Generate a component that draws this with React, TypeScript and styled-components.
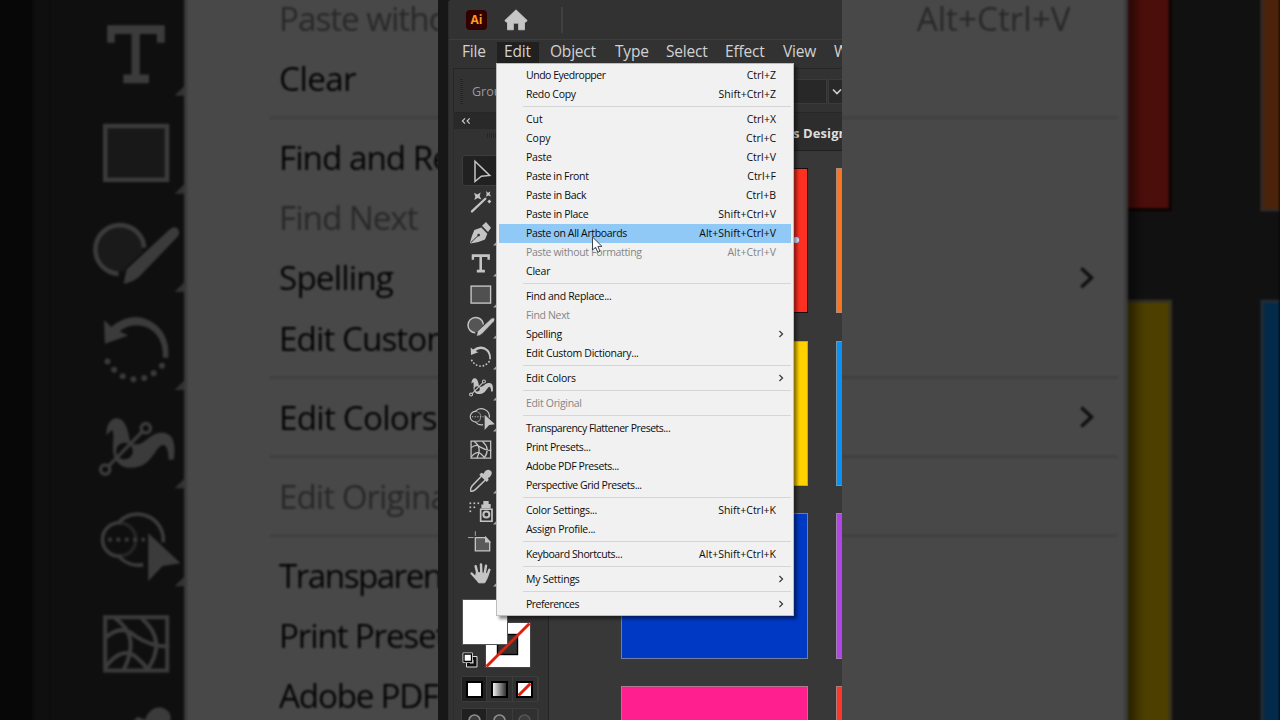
import React from "react";
import styled, { createGlobalStyle, css } from "styled-components";

const GlobalStyle = createGlobalStyle`
  * { box-sizing: border-box; }
  body { margin: 0; background: #000; overflow: hidden; }
`;

const uiFont = `"Open Sans", "Noto Sans", sans-serif`;
const ink = "#c4c4c4";

const Stage = styled.main`
  position: relative;
  display: flex;
  justify-content: center;
  width: 1280px;
  height: 720px;
  overflow: hidden;
  background: #050505;
  font-family: ${uiFont};
`;

const Backdrop = styled.div`
  position: absolute;
  inset: 0;
  display: flex;
  justify-content: center;
  filter: brightness(0.3) blur(1px);
`;

const Enlarged = styled.div`
  flex: none;
  width: 404px;
  height: 720px;
  transform: scale(3.166);
`;

const Phone = styled.div`
  position: relative;
  flex: none;
  width: 404px;
  height: 720px;
`;

const Scene = styled.section`
  position: relative;
  width: 404px;
  height: 720px;
  padding-left: 10px;
  overflow: hidden;
  background: #171717;
`;

const Window = styled.div`
  display: flex;
  flex-direction: column;
  width: 394px;
  height: 720px;
  background: #323232;
  border-left: 1px solid #2b2b2b;
  border-top-left-radius: 3px;
`;

const TitleBar = styled.header`
  display: flex;
  align-items: center;
  flex: none;
  height: 39px;
  padding-left: 17px;
`;

const Logo = styled.div`
  width: 21px;
  height: 20px;
  border-radius: 4px;
  background: #330000;
  color: #ff9a1a;
  font: 700 12px/19px ${uiFont};
  text-align: center;
`;

const HomeIcon = styled.svg`
  width: 24px;
  height: 22px;
  margin-left: 17px;
`;

const TitleDivider = styled.i`
  width: 2px;
  height: 26px;
  margin-left: 33px;
  background: #404040;
`;

const MenuBar = styled.nav`
  display: flex;
  flex: none;
  height: 29px;
  padding: 2px 0 5px 6px;
  border-top: 1px solid #3d3d3d;
  overflow: hidden;
`;

const MenuBarItem = styled.span<{ $w: number; $gap?: number; $open?: boolean }>`
  flex: none;
  width: ${(p) => p.$w}px;
  margin-right: ${(p) => p.$gap ?? 0}px;
  padding-left: 7px;
  color: #d2d2d2;
  background: ${(p) => (p.$open ? "#202020" : "transparent")};
  font-size: 15.5px;
  letter-spacing: -0.2px;
  line-height: 19px;
  white-space: nowrap;
`;

const ControlBar = styled.div`
  display: flex;
  align-items: center;
  flex: none;
  height: 45px;
  margin-left: 4px;
  padding-top: 2px;
  border: solid #272727;
  border-width: 1px 0 1px 1px;
  overflow: hidden;
`;

const Grip = styled.i`
  flex: none;
  width: 3px;
  height: 25px;
  margin-left: 6px;
  background: repeating-linear-gradient(#242424 0 1px, #363636 1px 2px);
`;

const ControlLabel = styled.span`
  flex: none;
  width: 321px;
  padding: 1px 0 0 9px;
  color: #9a9a9a;
  font-size: 12.5px;
  line-height: 20px;
`;

const Field = styled.div<{ $w: number }>`
  display: flex;
  align-items: center;
  flex: none;
  width: ${(p) => p.$w}px;
  height: 25px;
  padding-left: 3px;
  margin-right: 1px;
  background: #282828;
  border: 1px solid #3b3b3b;
`;

const Workspace = styled.div`
  display: flex;
  flex: 1;
  min-height: 0;
  padding-left: 4px;
`;

const Dock = styled.aside`
  flex: none;
  width: 96px;
  border-right: 1px solid #242424;
  border-left: 1px solid #2c2c2c;
`;

const DockHeader = styled.div`
  height: 16px;
  padding: 4px 0 0 7px;
  background: #292929;
`;

const DockGrip = styled.div`
  width: 32px;
  height: 5px;
  margin: 4px auto 16.7px 33px;
  background: repeating-linear-gradient(90deg, #262626 0 1px, #343434 1px 2px);
`;

const ToolColumn = styled.div`
  display: flex;
  flex-direction: column;
  margin: 0 0 9.3px 8px;
`;

const Tool = styled.div<{ $active?: boolean }>`
  width: 38px;
  height: 31.05px;
  ${(p) =>
    p.$active &&
    css`
      background: #212121;
      border-radius: 3px;
      box-shadow: inset 0 0 0 1px #3c3c3c;
    `}
  svg { display: block; width: 38px; height: 31px; }
`;

const ColorWell = styled.div`
  position: relative;
  width: 69px;
  height: 68px;
  margin-left: 8px;
`;

const StrokeSwatch = styled.svg`
  position: absolute;
  left: 23px;
  top: 23px;
  width: 46px;
  height: 46px;
`;

const FillSwatch = styled.div`
  position: absolute;
  left: 0;
  top: 0;
  width: 46px;
  height: 46px;
  background: #fff;
  border: 1px solid #555;
`;

const SwapIcon = styled.svg`
  position: absolute;
  left: 0;
  top: 53px;
  width: 16px;
  height: 16px;
`;

const ModeRow = styled.div<{ $mt: number }>`
  display: flex;
  width: 78px;
  height: 26px;
  margin: ${(p) => p.$mt}px 0 0 7px;
  border: 1px solid #3c3c3c;
  border-radius: 2px;
`;

const Mode = styled.div<{ $on?: boolean }>`
  display: flex;
  align-items: center;
  justify-content: center;
  flex: 1;
  background: ${(p) => (p.$on ? "#202020" : "#303030")};
  border-right: 1px solid #3c3c3c;
  svg { width: 17px; height: 17px; }
`;

const Documents = styled.div`
  display: flex;
  flex-direction: column;
  flex: 1;
  min-width: 0;
`;

const TabStrip = styled.div`
  flex: none;
  height: 38px;
  padding: 10px 0 0 244px;
  background: #2d2d2d;
  border-bottom: 1px solid #202020;
  color: #dedede;
  font: 700 13px/20px ${uiFont};
  letter-spacing: 0.1px;
  white-space: nowrap;
  overflow: hidden;
`;

const Canvas = styled.div`
  display: grid;
  flex: 1;
  grid-template-columns: 187.4px 187.4px;
  grid-auto-rows: 145.4px;
  gap: 27.3px 27.4px;
  padding: 17px 0 0 72px;
  min-height: 0;
  overflow: hidden;
  background: #383838;
`;

const Artboard = styled.div<{ $c: string; $edge?: string }>`
  background: ${(p) => p.$c};
  border: 1px solid ${(p) => p.$edge ?? "rgba(150, 150, 150, 0.75)"};
`;

const Anchor = styled.i`
  position: absolute;
  left: 355px;
  top: 237px;
  width: 6px;
  height: 6px;
  border-radius: 3px;
  background: #eef0ff;
  box-shadow: 0 0 1px 0.5px #8a5fd0;
`;

const Popup = styled.div`
  position: absolute;
  left: 58px;
  top: 63px;
  width: 298px;
  height: 553px;
  padding: 2px;
  background: #f1f1f1;
  border: 1px solid #bdbdbd;
  box-shadow: 3px 3px 3px rgba(0, 0, 0, 0.45);
`;

const Entry = styled.div<{ $hot?: boolean; $dim?: boolean }>`
  display: flex;
  align-items: center;
  justify-content: space-between;
  height: 19px;
  padding: 0 15px 0 27px;
  background: ${(p) => (p.$hot ? "#90c8f6" : "transparent")};
  color: ${(p) => (p.$dim ? "#858585" : "#0c0c0c")};
  font-size: 10.5px;
  line-height: 19px;
  white-space: nowrap;
`;

const EntryLabel = styled.span<{ $track: number }>`
  letter-spacing: ${(p) => p.$track}px;
`;

const Arrow = styled.svg`
  width: 6px;
  height: 8px;
  margin: -1.5px -7.5px 0 0;
`;

const Rule = styled.hr`
  height: 1px;
  margin: 2px 0 3px 24px;
  border: 0;
  background: #d6d6d6;
`;

const Pointer = styled.svg`
  position: absolute;
  left: 153px;
  top: 236px;
  width: 13px;
  height: 18px;
`;

type Line = { label: string; track: number; keys?: string; sub?: boolean; dim?: boolean; hot?: boolean; peek?: string };

const groups: Line[][] = [
  [
    { label: "Undo Eyedropper", track: -0.47, keys: "Ctrl+Z" },
    { label: "Redo Copy", track: -0.3, keys: "Shift+Ctrl+Z" },
  ],
  [
    { label: "Cut", track: 0, keys: "Ctrl+X" },
    { label: "Copy", track: 0, keys: "Ctrl+C" },
    { label: "Paste", track: -0.2, keys: "Ctrl+V" },
    { label: "Paste in Front", track: -0.36, keys: "Ctrl+F" },
    { label: "Paste in Back", track: -0.33, keys: "Ctrl+B" },
    { label: "Paste in Place", track: -0.34, keys: "Shift+Ctrl+V" },
    { label: "Paste on All Artboards", track: -0.35, keys: "Alt+Shift+Ctrl+V", hot: true },
    { label: "Paste without Formatting", track: -0.33, keys: "Alt+Ctrl+V", dim: true, peek: "Paste witho" },
    { label: "Clear", track: -0.2, peek: "Clear" },
  ],
  [
    { label: "Find and Replace...", track: -0.32, peek: "Find and Re" },
    { label: "Find Next", track: -0.33, dim: true, peek: "Find Next" },
    { label: "Spelling", track: -0.28, sub: true, peek: "Spelling" },
    { label: "Edit Custom Dictionary...", track: -0.3, peek: "Edit Custom" },
  ],
  [{ label: "Edit Colors", track: -0.25, sub: true, peek: "Edit Colors" }],
  [{ label: "Edit Original", track: -0.32, dim: true, peek: "Edit Origina" }],
  [
    { label: "Transparency Flattener Presets...", track: -0.49, peek: "Transparen" },
    { label: "Print Presets...", track: -0.38, peek: "Print Preset" },
    { label: "Adobe PDF Presets...", track: -0.4, peek: "Adobe PDF" },
    { label: "Perspective Grid Presets...", track: -0.43 },
  ],
  [
    { label: "Color Settings...", track: -0.3, keys: "Shift+Ctrl+K" },
    { label: "Assign Profile...", track: -0.28 },
  ],
  [{ label: "Keyboard Shortcuts...", track: -0.4, keys: "Alt+Shift+Ctrl+K" }],
  [{ label: "My Settings", track: -0.25, sub: true }],
  [{ label: "Preferences", track: -0.5, sub: true }],
];

const boards: [string, string?][] = [
  ["#ff3021", "#1c0c0a"],
  ["#fb7420"],
  ["#ffd200"],
  ["#0b90f3"],
  ["#0039c4"],
  ["#b245ea"],
  ["#ff1f8f"],
  ["#ff3528"],
];

const tools: { icon: React.ReactNode; flyout: boolean }[] = [
  {
    flyout: false,
    icon: <path transform="translate(-22 -4.5) scale(.3333)" d="M105 32L149 75L124 77L105 93Z" fill="none" stroke={ink} strokeWidth="4.5" />,
  },
  {
    flyout: false,
    icon: (
      <g transform="translate(-22 -35.55) scale(.3333)" fill={ink}>
        <path d="M96 183L136 145" stroke={ink} strokeWidth="7" strokeLinecap="round" />
        <path d="M102 127L112 132L122 126L119 137L124 147L113 143L103 149L106 138ZM138 122L144 127L151 123L149 131L153 138L145 135L138 139L140 131ZM148 147L154 153L148 159L142 153Z" />
      </g>
    ),
  },
  {
    flyout: true,
    icon: (
      <g transform="translate(-22 -66.6) scale(.3333)">
        <path d="M90 276Q96 254 103 239L124 231L142 250L135 267Q117 276 92 279Z" fill={ink} />
        <path d="M126 226L138 215L153 232L144 245Z" fill={ink} />
        <path d="M92 277L114 256" stroke="#323232" strokeWidth="3" />
        <circle cx="116" cy="254" r="4" fill="#323232" />
      </g>
    ),
  },
  {
    flyout: true,
    icon: <path d="M9.7 6.3H27.9V11.8H25.4V9H20V21.8H22.9V24.6H14.8V21.8H17.4V9H12.1V11.8H9.7Z" fill={ink} />,
  },
  {
    flyout: true,
    icon: <rect x="9.1" y="7.1" width="19.5" height="17" fill="#505050" stroke={ink} strokeWidth="1.4" />,
  },
  {
    flyout: true,
    icon: (
      <>
        <circle cx="14" cy="15" r="7" fill="#555" />
        <path d="M21.4 14.5A7.7 7.7 0 1 0 13.3 22.8" fill="none" stroke={ink} strokeWidth="1.5" />
        <path d="M14.5 26.3L15.6 21.2L29.2 8.6Q31.3 7 32.4 8.6Q33.2 10 32.2 11.2L20 23.9Q18 25.8 14.5 26.3Z" fill={ink} stroke="#323232" strokeWidth=".6" />
      </>
    ),
  },
  {
    flyout: true,
    icon: (
      <>
        <path d="M8.7 6.4L11 8.6Q17 3.6 23 6.5Q29.6 10 29 18.3L27.3 18.3Q27.5 11 22 8.6Q17.5 6.9 13.6 9.9L16.3 11.3L9 13.9Z" fill={ink} />
        {[[9.8, 19.5], [11.9, 22.1], [14.6, 24.1], [18, 25.1], [21.4, 24.7], [24.4, 23.2], [27, 20.8]].map(([x, y]) => (
          <circle key={x} cx={x} cy={y} r=".95" fill={ink} />
        ))}
      </>
    ),
  },
  {
    flyout: true,
    icon: (
      <g transform="translate(-24.2 -11.85) scale(.1053)">
        <path d="M320 224C318 190 335 172 352 173C380 177 385 215 390 240Q400 256 420 250C445 240 455 215 490 217C522 221 528 252 522 297L506 298C506 275 502 250 486 254C465 262 455 320 395 322C350 322 335 288 340 245C342 222 340 205 334 210Z" fill={ink} />
        <circle cx="374" cy="272" r="25" fill="#323232" />
        <path d="M326 317L428 213" stroke={ink} strokeWidth="10" />
        <g fill="#323232" stroke={ink} strokeWidth="10">
          <circle cx="438" cy="203" r="14" />
          <circle cx="316" cy="327" r="14" />
        </g>
      </g>
    ),
  },
  {
    flyout: true,
    icon: (
      <g transform="translate(-24.2 -42.6) scale(.1053)" fill="none" stroke={ink} strokeWidth="11">
        <path d="M358 482A77 77 0 0 1 490 543M430 610A77 77 0 0 1 358 586" />
        <path d="M365 485A50 50 0 1 0 365 584" />
        <path d="M365 485A50 50 0 0 1 365 584" strokeOpacity=".5" />
        <path d="M325 535H435" strokeDasharray="11 14" />
        <path d="M445 515L542 606L488 614L445 660Z" fill={ink} stroke="none" />
      </g>
    ),
  },
  {
    flyout: false,
    icon: (
      <g transform="translate(-24.2 -73.75) scale(.1053)" fill="none" stroke={ink} strokeWidth="12">
        <path d="M316 769H502V929H316Z" />
        <path d="M318 830Q365 788 405 825Q455 858 508 857M318 918Q365 855 408 888Q430 905 445 928M345 772Q425 825 370 930M425 772Q505 840 440 930" />
      </g>
    ),
  },
  {
    flyout: true,
    icon: (
      <g transform="translate(-22 -35) scale(.3333)">
        <path d="M124 139L96 168Q90 176 92 183Q99 185 106 179L136 150" fill="none" stroke={ink} strokeWidth="4.5" />
        <path d="M118 134L124 128L131 131Q135 119 146 119Q157 122 155 132Q152 141 144 144L146 150L140 156Z" fill={ink} />
      </g>
    ),
  },
  {
    flyout: true,
    icon: (
      <g transform="translate(-22 -66.05) scale(.3333)" fill={ink}>
        {[[91, 220], [103, 220], [115, 220], [91, 232], [103, 232], [91, 244]].map(([x, y]) => (
          <rect key={`${x}-${y}`} x={x - 2.5} y={y - 2.5} width="5" height="5" />
        ))}
        <path d="M130 213H146V222H152V236H124V224H130Z" />
        <path d="M122 238H156V274H122Z" fill="none" stroke={ink} strokeWidth="5" />
        <circle cx="139" cy="254" r="9" fill="none" stroke={ink} strokeWidth="6" />
      </g>
    ),
  },
  {
    flyout: false,
    icon: (
      <g transform="translate(-22 -97.1) scale(.3333)" stroke={ink} strokeWidth="4">
        <path d="M84 323H101M106 304V318" strokeOpacity=".8" strokeWidth="3" />
        <path d="M106 323H137L149 336V363H106Z" fill="#5a5a5a" />
        <path d="M137 323V336H149Z" fill={ink} />
      </g>
    ),
  },
  {
    flyout: true,
    icon: (
      <g transform="translate(-22 -128.15) scale(.3333)" fill={ink} stroke={ink} strokeLinecap="round" strokeWidth="7.5">
        <path d="M107 409L113 434M123 404L124 430M138 408L134 432M148 420L141 440M95 431L110 447" />
        <path d="M110 428L142 431L141 447L134 459H116L106 445Z" strokeWidth="3" strokeLinejoin="round" />
      </g>
    ),
  },
];

const Chevron = () => (
  <Arrow viewBox="0 0 6 8">
    <path d="M1.4 1L4.6 4L1.4 7" fill="none" stroke="#333" strokeWidth="1.1" />
  </Arrow>
);

function EditMenu({ peek }: { peek?: boolean }) {
  return (
    <Popup>
      {groups.map((g, gi) => (
        <React.Fragment key={gi}>
          {gi > 0 && <Rule />}
          {g.map((l) => {
            const text = peek ? l.peek : l.label;
            return (
              <Entry key={l.label} $hot={l.hot} $dim={l.dim}>
                {text && <EntryLabel $track={l.track}>{text}</EntryLabel>}
                {text && l.keys && <span>{l.keys}</span>}
                {text && l.sub && <Chevron />}
              </Entry>
            );
          })}
        </React.Fragment>
      ))}
    </Popup>
  );
}

function Illustrator({ peek }: { peek?: boolean }) {
  const fade = peek ? "fade-large" : "fade";
  return (
    <Scene>
      <Window>
        <TitleBar>
          {!peek && <Logo>Ai</Logo>}
          <HomeIcon viewBox="0 0 24 22">
            <path d="M12 .8L23.2 11.5L21.6 13.2H20.5V20.8H14.6V14.2H9.4V20.8H3.5V13.2H2.4L.8 11.5Z" fill="#c6c6c6" stroke="#c6c6c6" strokeWidth=".8" strokeLinejoin="round" />
          </HomeIcon>
          <TitleDivider />
        </TitleBar>
        <MenuBar>
          {!peek && (
            <>
              <MenuBarItem $w={42}>File</MenuBarItem>
              <MenuBarItem $w={42} $gap={4} $open>Edit</MenuBarItem>
              <MenuBarItem $w={65}>Object</MenuBarItem>
              <MenuBarItem $w={51}>Type</MenuBarItem>
              <MenuBarItem $w={59}>Select</MenuBarItem>
              <MenuBarItem $w={58}>Effect</MenuBarItem>
              <MenuBarItem $w={51}>View</MenuBarItem>
              <MenuBarItem $w={70}>Window</MenuBarItem>
            </>
          )}
        </MenuBar>
        <ControlBar>
          <Grip />
          <ControlLabel>{!peek && "Group"}</ControlLabel>
          <Field $w={43} />
          <Field $w={30}>
            <svg width="10" height="8" viewBox="0 0 10 8">
              <path d="M1 1.5L5 5.5L9 1.5" fill="none" stroke="#d0d0d0" strokeWidth="1.6" />
            </svg>
          </Field>
        </ControlBar>
        <Workspace>
          <Dock>
            <DockHeader>
              <svg width="10" height="8" viewBox="0 0 10 8" display="block">
                <path d="M4 1.4L1.4 4L4 6.6M8.7 1.4L6.1 4L8.7 6.6" fill="none" stroke="#c8c8c8" strokeWidth="1.2" />
              </svg>
            </DockHeader>
            <DockGrip />
            <ToolColumn>
              {tools.map((t, i) => (
                <Tool key={i} $active={i === 0}>
                  <svg viewBox="0 0 38 31">
                    {t.icon}
                    {t.flyout && <path d="M31 28.5L36 23.5V28.5Z" fill="#a8a8a8" />}
                  </svg>
                </Tool>
              ))}
            </ToolColumn>
            <ColorWell>
              <StrokeSwatch viewBox="0 0 46 46">
                <rect x=".5" y=".5" width="45" height="45" fill="#fff" stroke="#444" />
                <rect x="12.5" y="12.5" width="20" height="20" fill="#323232" stroke="#000" strokeWidth="1.4" />
                <path d="M1.5 44.5L44.5 1.5" stroke="#e0200f" strokeWidth="3" />
              </StrokeSwatch>
              <FillSwatch />
              <SwapIcon viewBox="0 0 16 16">
                <path d="M4.5 4.5H15V15H4.5Z" fill="#111" stroke="#ddd" strokeWidth="1" />
                <path d="M8 8H11.5V11.5H8Z" fill="#ddd" />
                <path d="M1 1H10.5V10.5H1Z" fill="#fff" stroke="#ddd" strokeWidth="1" />
                <path d="M2 2H9.5V9.5H2Z" fill="#fff" stroke="#000" strokeWidth="1.3" />
              </SwapIcon>
            </ColorWell>
            <ModeRow $mt={9.5}>
              <Mode $on>
                <svg viewBox="0 0 17 17"><rect x="1" y="1" width="15" height="15" fill="#fff" stroke="#000" strokeWidth="2" /></svg>
              </Mode>
              <Mode>
                <svg viewBox="0 0 17 17">
                  <defs>
                    <linearGradient id={fade}><stop offset="0" stopColor="#fff" /><stop offset="1" stopColor="#222" /></linearGradient>
                  </defs>
                  <rect x="1" y="1" width="15" height="15" fill={`url(#${fade})`} stroke="#000" strokeWidth="2" />
                </svg>
              </Mode>
              <Mode>
                <svg viewBox="0 0 17 17">
                  <rect x="1" y="1" width="15" height="15" fill="#fff" stroke="#000" strokeWidth="2" />
                  <path d="M2.5 14.5L14.5 2.5" stroke="#e0200f" strokeWidth="3" />
                </svg>
              </Mode>
            </ModeRow>
            <ModeRow $mt={6}>
              {["#8f8f8f", "#8f8f8f", "#565656"].map((c, i) => (
                <Mode key={i} $on={i === 0}>
                  <svg viewBox="0 0 17 17"><circle cx="8.5" cy="7.5" r="5.5" fill="#3c3c3c" stroke={c} strokeWidth="1.6" /></svg>
                </Mode>
              ))}
            </ModeRow>
          </Dock>
          <Documents>
            <TabStrip>{!peek && "s Design"}</TabStrip>
            <Canvas>
              {boards.map(([c, edge], i) => (
                <Artboard key={i} $c={c} $edge={edge} />
              ))}
            </Canvas>
          </Documents>
        </Workspace>
      </Window>
      {!peek && <Anchor />}
      <EditMenu peek={peek} />
      {!peek && (
        <Pointer viewBox="0 0 13 18">
          <path d="M1.5 1V14L4.6 11.2L6.8 16.3L9 15.3L6.9 10.4H11Z" fill="#fff" stroke="#3c4650" strokeWidth="1" />
        </Pointer>
      )}
    </Scene>
  );
}

export default function App() {
  return (
    <>
      <GlobalStyle />
      <Stage>
        <Backdrop aria-hidden>
          <Enlarged>
            <Illustrator peek />
          </Enlarged>
        </Backdrop>
        <Phone>
          <Illustrator />
        </Phone>
      </Stage>
    </>
  );
}
